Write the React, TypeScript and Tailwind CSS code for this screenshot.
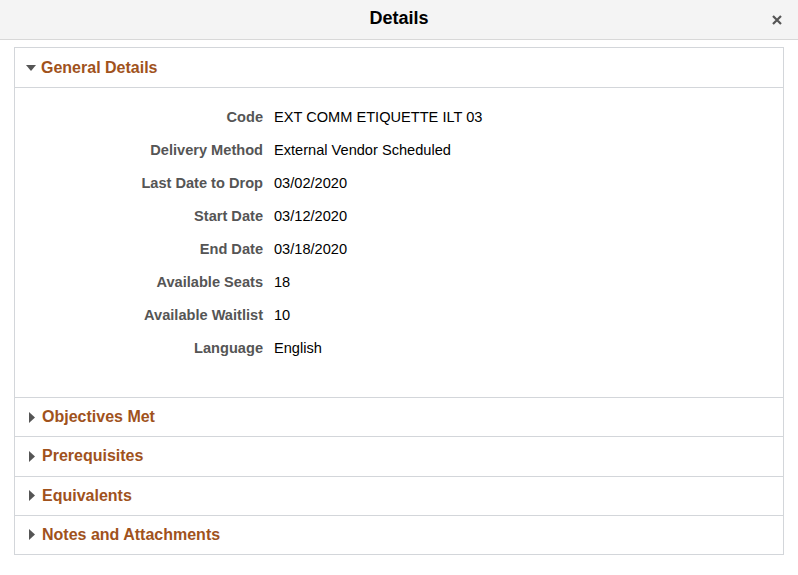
import React from "react";

const rows: [string, string][] = [
  ["Code", "EXT COMM ETIQUETTE ILT 03"],
  ["Delivery Method", "External Vendor Scheduled"],
  ["Last Date to Drop", "03/02/2020"],
  ["Start Date", "03/12/2020"],
  ["End Date", "03/18/2020"],
  ["Available Seats", "18"],
  ["Available Waitlist", "10"],
  ["Language", "English"],
];

const collapsed = ["Objectives Met", "Prerequisites", "Equivalents", "Notes and Attachments"];

const CaretDown = () => (
  <svg width="10" height="6" viewBox="0 0 10 6" className="shrink-0">
    <path d="M0 0 L10 0 L5 6 Z" fill="#555" />
  </svg>
);

const CaretRight = () => (
  <svg width="6" height="11" viewBox="0 0 6 11" className="shrink-0">
    <path d="M0 0 L6 5.5 L0 11 Z" fill="#555" />
  </svg>
);

export default function App() {
  return (
    <div
      className="w-[798px] h-[575px] bg-white"
      style={{ fontFamily: '"Liberation Sans", Arial, sans-serif' }}
    >
      <div className="h-[40px] bg-[#f4f4f4] border-b border-[#d8d8d8] flex items-center justify-center relative">
        <h1 className="text-[18px] font-bold text-black -mt-[2px]">Details</h1>
        <button className="absolute right-[15px] top-[14px] w-[12px] h-[12px]">
          <svg width="12" height="12" viewBox="0 0 12 12">
            <path d="M2 2 L10 10 M10 2 L2 10" stroke="#555" strokeWidth="2.2" />
          </svg>
        </button>
      </div>

      <div className="px-[14px] pt-[7px]">
        <div className="border border-[#d3d6da]">
          <div className="h-[40px] flex items-center gap-[5px] pl-[11px] border-b border-[#d3d6da]">
            <CaretDown />
            <span className="text-[16px] font-bold text-[#a0521c]">General Details</span>
          </div>
          <div className="pt-[13px] pb-[32px]">
            {rows.map(([label, value]) => (
              <div key={label} className="h-[33px] flex items-center">
                <div className="w-[248px] text-right text-[14.6px] font-bold text-[#555]">{label}</div>
                <div className="pl-[11px] text-[14.6px] text-black">{value}</div>
              </div>
            ))}
          </div>
          {collapsed.map((title) => (
            <div
              key={title}
              className="h-[39.25px] flex items-center gap-[7px] pl-[14px] border-t border-[#d3d6da]"
            >
              <CaretRight />
              <span className="text-[16px] font-bold text-[#a0521c]">{title}</span>
            </div>
          ))}
        </div>
      </div>
    </div>
  );
}
